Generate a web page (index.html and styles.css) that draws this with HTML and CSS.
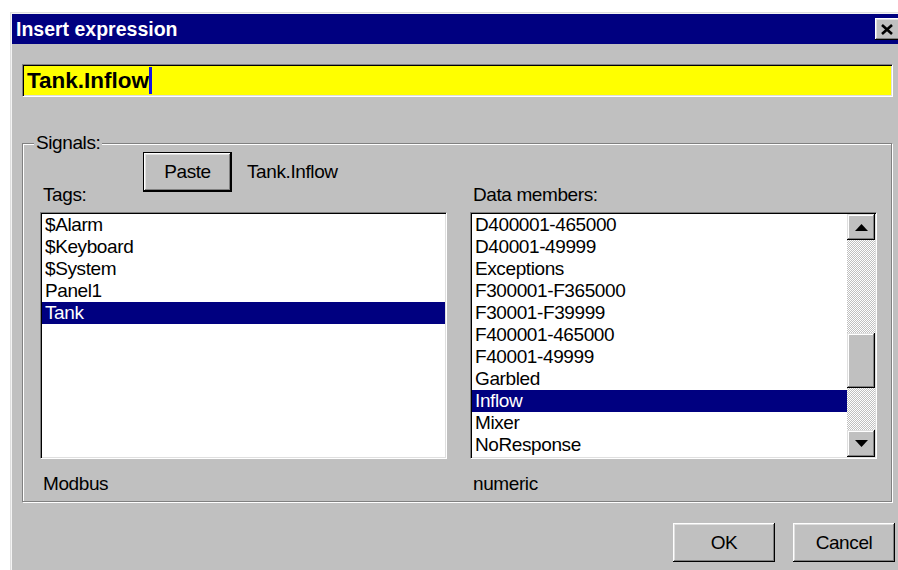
FILE: index.html
```html
<!DOCTYPE html>
<html lang="en">
<head>
<meta charset="utf-8">
<title>Insert expression</title>
<link rel="stylesheet" href="styles.css">
</head>
<body>
<div class="dialog">
  <div class="titlebar">
    <span class="title">Insert expression</span>
    <button class="close" type="button" aria-label="Close">
      <svg width="14" height="11" viewBox="0 0 14 11"><path d="M2 1 L12 10 M12 1 L2 10" stroke="#000" stroke-width="2.6" fill="none"/></svg>
    </button>
  </div>
  <div class="content">
    <div class="expr"><span class="expr-text">Tank.Inflow</span><span class="caret"></span></div>

    <div class="group">
      <span class="legend">Signals:</span>
      <div class="paste-row">
        <button class="btn btn-default paste" type="button">Paste</button>
        <span class="current">Tank.Inflow</span>
      </div>
      <div class="columns">
        <div class="col">
          <div class="label">Tags:</div>
          <div class="list">
            <ul class="items">
              <li>$Alarm</li>
              <li>$Keyboard</li>
              <li>$System</li>
              <li>Panel1</li>
              <li class="selected">Tank</li>
            </ul>
          </div>
          <div class="label foot">Modbus</div>
        </div>
        <div class="col">
          <div class="label">Data members:</div>
          <div class="list">
            <ul class="items">
              <li>D400001-465000</li>
              <li>D40001-49999</li>
              <li>Exceptions</li>
              <li>F300001-F365000</li>
              <li>F30001-F39999</li>
              <li>F400001-465000</li>
              <li>F40001-49999</li>
              <li>Garbled</li>
              <li class="selected">Inflow</li>
              <li>Mixer</li>
              <li>NoResponse</li>
            </ul>
            <div class="scrollbar">
              <div class="sb-btn sb-up"><svg width="13" height="7" viewBox="0 0 13 7"><polygon points="6.5,0 13,7 0,7" fill="#000"/></svg></div>
              <div class="sb-track"><div class="sb-thumb"></div></div>
              <div class="sb-btn sb-down"><svg width="13" height="7" viewBox="0 0 13 7"><polygon points="0,0 13,0 6.5,7" fill="#000"/></svg></div>
            </div>
          </div>
          <div class="label foot">numeric</div>
        </div>
      </div>
    </div>

    <div class="actions">
      <button class="btn action" type="button">OK</button>
      <button class="btn action" type="button">Cancel</button>
    </div>
  </div>
</div>
</body>
</html>
```
FILE: styles.css
```css
* {
  box-sizing: border-box;
}

html,
body {
  margin: 0;
  padding: 0;
  overflow: hidden;
  background: #fff;
}

body {
  font-family: "Liberation Sans", Arial, sans-serif;
  font-size: 19px;
  letter-spacing: -0.4px;
  color: #000;
}

/* window frame */
.dialog {
  margin: 12px 0 0 10px;
  width: 895px;
  height: 570px;
  background: #c0c0c0;
  border-top: 1px solid #dfdfdf;
  border-left: 1px solid #dfdfdf;
  box-shadow: inset 1px 1px #f4f4f4;
  padding: 1px 0 0 1px;
}

.titlebar {
  height: 30px;
  background: #000080;
  color: #fff;
  display: flex;
  align-items: center;
  padding: 0 2px 0 4px;
}

.title {
  font-weight: bold;
  font-size: 19.5px;
  letter-spacing: 0;
}

.close {
  margin-left: auto;
  width: 28px;
  height: 22px;
  padding: 0 4px 0 0;
  border: 0;
  background: #c0c0c0;
  display: flex;
  align-items: center;
  justify-content: center;
  box-shadow: inset -1px -1px #000, inset 1px 1px #fff, inset -2px -2px #808080, inset 2px 2px #dfdfdf;
}

.content {
  padding: 20px 0 0 10px;
}

/* expression field */
.expr {
  width: 871px;
  height: 33px;
  background: #ff0;
  border: 1px solid;
  border-color: #808080 #fff #fff #808080;
  box-shadow: inset 1px 1px #000, inset -1px -1px #dfdfdf;
  display: flex;
  align-items: center;
  padding-left: 4px;
}

.expr-text {
  font-weight: bold;
  font-size: 22.5px;
  letter-spacing: 0;
}

.caret {
  width: 3px;
  height: 27px;
  background: #1414e6;
}

/* "Signals" group box */
.group {
  position: relative;
  margin-top: 46px;
  width: 870px;
  height: 359px;
  border: 1px solid #808080;
  box-shadow: inset 1px 1px #fff, 1px 1px #fff;
  padding: 8px 0 0 17px;
}

.legend {
  position: absolute;
  top: -11px;
  left: 11px;
  padding: 0 2px;
  line-height: 20px;
  background: #c0c0c0;
}

.paste-row {
  display: flex;
  align-items: center;
  gap: 15px;
  height: 40px;
  margin: 0 0 -7px 103px;
}

.columns {
  display: grid;
  grid-template-columns: 407px 407px;
  column-gap: 23px;
}

.label {
  height: 20px;
  line-height: 20px;
  padding-left: 3px;
  white-space: nowrap;
}

.label.foot {
  margin-top: 15px;
}

/* list boxes */
.list {
  margin-top: 7px;
  height: 247px;
  background: #fff;
  border: 1px solid;
  border-color: #808080 #fff #fff #808080;
  box-shadow: inset 1px 1px #000, inset -1px -1px #dfdfdf;
  padding: 1px;
  display: flex;
}

.items {
  flex: 1;
  list-style: none;
  margin: 0;
  padding: 0;
  overflow: hidden;
}

.items li {
  height: 22px;
  line-height: 22px;
  padding-left: 3px;
  white-space: nowrap;
}

.items li.selected {
  background: #000080;
  color: #fff;
}

/* vertical scroll bar */
.scrollbar {
  width: 28px;
  display: flex;
  flex-direction: column;
}

.sb-btn,
.sb-thumb {
  background: #c0c0c0;
  box-shadow: inset -1px -1px #000, inset 1px 1px #dfdfdf, inset -2px -2px #808080, inset 2px 2px #fff;
}

.sb-btn {
  display: flex;
  align-items: center;
  justify-content: center;
}

.sb-up {
  height: 26px;
}

.sb-down {
  height: 27px;
}

.sb-track {
  flex: 1;
  background-image: conic-gradient(#fff 25%, #c0c0c0 0 50%, #fff 0 75%, #c0c0c0 0);
  background-size: 2px 2px;
}

.sb-thumb {
  margin-top: 93px;
  height: 55px;
}

/* push buttons */
.btn {
  font: inherit;
  letter-spacing: inherit;
  color: #000;
  background: #c0c0c0;
  border: 0;
  padding: 0;
  box-shadow: inset -1px -1px #000, inset 1px 1px #fff, inset -2px -2px #808080, inset 2px 2px #dfdfdf;
}

.btn-default {
  border: 1px solid #000;
}

.paste {
  width: 89px;
  height: 40px;
}

.actions {
  width: 873px;
  margin-top: 21px;
  display: flex;
  justify-content: flex-end;
  gap: 18px;
}

.action {
  width: 102px;
  height: 39px;
}
```
